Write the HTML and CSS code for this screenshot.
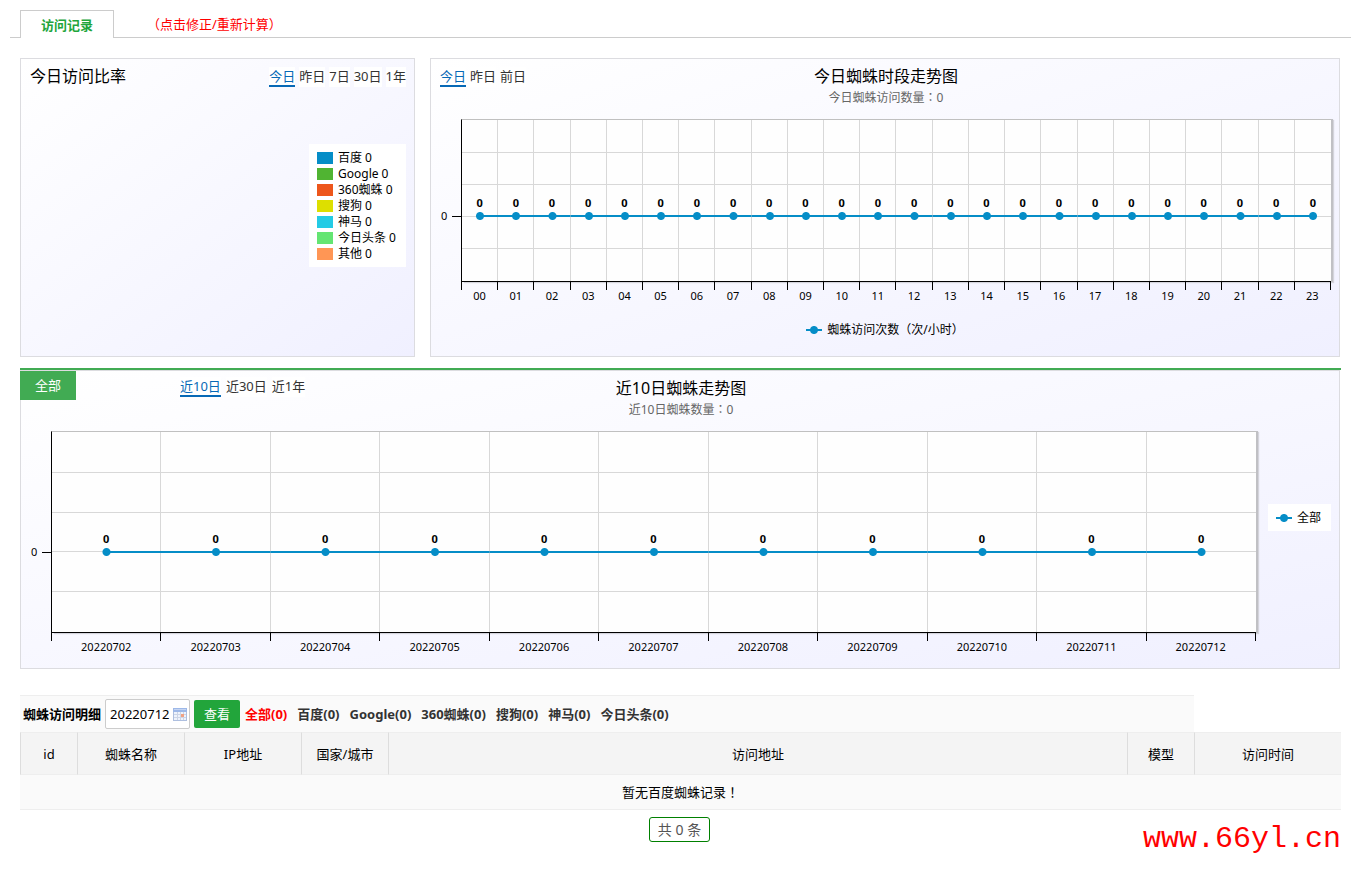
FILE: index.html
```html
<!DOCTYPE html>
<html lang="zh-CN">
<head>
<meta charset="utf-8">
<title>访问记录</title>
<link rel="stylesheet" href="styles.css">
</head>
<body>
<nav class="tabs">
  <a class="tab" href="#records">访问记录</a>
  <a class="recount" href="#recount">（点击修正/重新计算）</a>
</nav>

<main class="content" id="records">
  <div class="panels">
    <section class="panel ratio">
      <header class="ratio-head">
        <h2 class="chart-title">今日访问比率</h2>
        <div class="ranges">
          <a class="range current" href="#today">今日</a>
          <a class="range" href="#yesterday">昨日</a>
          <a class="range" href="#7d">7日</a>
          <a class="range" href="#30d">30日</a>
          <a class="range" href="#1y">1年</a>
        </div>
      </header>
      <ul class="pie-legend">
        <li><i class="swatch baidu"></i>百度 0</li>
        <li><i class="swatch google"></i>Google 0</li>
        <li><i class="swatch so360"></i>360蜘蛛 0</li>
        <li><i class="swatch sogou"></i>搜狗 0</li>
        <li><i class="swatch shenma"></i>神马 0</li>
        <li><i class="swatch toutiao"></i>今日头条 0</li>
        <li><i class="swatch other"></i>其他 0</li>
      </ul>
    </section>

    <section class="panel hourly">
      <header class="chart-head">
        <div class="ranges">
          <a class="range current" href="#h-today">今日</a>
          <a class="range" href="#h-yesterday">昨日</a>
          <a class="range" href="#h-before">前日</a>
        </div>
        <div class="titles">
          <h2 class="chart-title">今日蜘蛛时段走势图</h2>
          <p class="subtitle">今日蜘蛛访问数量<span class="colon" lang="zh-TW">：</span>0</p>
        </div>
      </header>
      <div class="chart">
        <div class="y-axis"><span>0</span></div>
        <div class="chart-main">
          <ol class="plot">
            <li><b>0</b><i></i></li><li><b>0</b><i></i></li><li><b>0</b><i></i></li><li><b>0</b><i></i></li>
            <li><b>0</b><i></i></li><li><b>0</b><i></i></li><li><b>0</b><i></i></li><li><b>0</b><i></i></li>
            <li><b>0</b><i></i></li><li><b>0</b><i></i></li><li><b>0</b><i></i></li><li><b>0</b><i></i></li>
            <li><b>0</b><i></i></li><li><b>0</b><i></i></li><li><b>0</b><i></i></li><li><b>0</b><i></i></li>
            <li><b>0</b><i></i></li><li><b>0</b><i></i></li><li><b>0</b><i></i></li><li><b>0</b><i></i></li>
            <li><b>0</b><i></i></li><li><b>0</b><i></i></li><li><b>0</b><i></i></li><li><b>0</b><i></i></li>
          </ol>
          <ol class="x-axis">
            <li>00</li><li>01</li><li>02</li><li>03</li><li>04</li><li>05</li><li>06</li><li>07</li>
            <li>08</li><li>09</li><li>10</li><li>11</li><li>12</li><li>13</li><li>14</li><li>15</li>
            <li>16</li><li>17</li><li>18</li><li>19</li><li>20</li><li>21</li><li>22</li><li>23</li>
          </ol>
        </div>
      </div>
      <p class="series-legend"><i class="marker"></i>蜘蛛访问次数（次/小时）</p>
    </section>
  </div>

  <section class="daily-wrap">
    <div class="panel daily">
      <header class="chart-head">
        <div class="daily-left">
          <a class="all-tab" href="#all">全部</a>
          <div class="ranges">
            <a class="range current" href="#10d">近10日</a>
            <a class="range" href="#d-30d">近30日</a>
            <a class="range" href="#d-1y">近1年</a>
          </div>
        </div>
        <div class="titles">
          <h2 class="chart-title">近10日蜘蛛走势图</h2>
          <p class="subtitle">近10日蜘蛛数量<span class="colon" lang="zh-TW">：</span>0</p>
        </div>
      </header>
      <div class="chart">
        <div class="y-axis"><span>0</span></div>
        <div class="chart-main">
          <ol class="plot">
            <li><b>0</b><i></i></li><li><b>0</b><i></i></li><li><b>0</b><i></i></li><li><b>0</b><i></i></li>
            <li><b>0</b><i></i></li><li><b>0</b><i></i></li><li><b>0</b><i></i></li><li><b>0</b><i></i></li>
            <li><b>0</b><i></i></li><li><b>0</b><i></i></li><li><b>0</b><i></i></li>
          </ol>
          <ol class="x-axis">
            <li>20220702</li><li>20220703</li><li>20220704</li><li>20220705</li><li>20220706</li><li>20220707</li>
            <li>20220708</li><li>20220709</li><li>20220710</li><li>20220711</li><li>20220712</li>
          </ol>
        </div>
        <p class="side-legend"><i class="marker"></i>全部</p>
      </div>
    </div>
  </section>

  <table class="records">
    <colgroup>
      <col class="c-id"><col class="c-name"><col class="c-ip"><col class="c-city"><col><col class="c-model"><col class="c-time">
    </colgroup>
    <thead>
      <tr>
        <td class="filter-cell" colspan="6">
          <form class="filter">
            <label class="filter-label" for="day">蜘蛛访问明细</label>
            <span class="date-box">
              <input id="day" type="text" value="20220712">
              <svg class="calendar" viewBox="0 0 14 13" aria-hidden="true">
                <rect x="0.5" y="0.5" width="13" height="12" fill="#eef3fc" stroke="#aebfdf"/>
                <rect x="0" y="0" width="14" height="4" fill="#9db8e8"/>
                <path d="M1 1.5h12" stroke="#c5d5f3"/>
                <path d="M1 6.5h12M1 9.5h12M4.500 4v8M7.500 4v8M10.500 4v8" stroke="#ccd5e6"/>
                <rect x="8" y="6" width="3" height="3" fill="#f0a183"/>
              </svg>
            </span>
            <button class="view" type="submit">查看</button>
            <a class="kind active" href="#k-all">全部(0)</a>
            <a class="kind" href="#k-baidu">百度(0)</a>
            <a class="kind" href="#k-google">Google(0)</a>
            <a class="kind" href="#k-360">360蜘蛛(0)</a>
            <a class="kind" href="#k-sogou">搜狗(0)</a>
            <a class="kind" href="#k-shenma">神马(0)</a>
            <a class="kind" href="#k-toutiao">今日头条(0)</a>
          </form>
        </td>
      </tr>
      <tr class="heads">
        <th>id</th><th>蜘蛛名称</th><th>IP地址</th><th>国家/城市</th><th>访问地址</th><th>模型</th><th>访问时间</th>
      </tr>
    </thead>
    <tbody>
      <tr><td class="empty" colspan="7">暂无百度蜘蛛记录<span class="colon" lang="zh-TW">！</span></td></tr>
    </tbody>
  </table>

  <footer class="pager"><span class="total">共 0 条</span></footer>
</main>
<div class="watermark">www.66yl.cn</div>
</body>
</html>
```
FILE: styles.css
```css
* { box-sizing: border-box; }

body {
  margin: 0;
  padding: 10px 10px 0;
  background: #fff;
  color: #000;
  font: 13px/20px "Noto Sans", "Noto Sans CJK SC", sans-serif;
  position: relative;
}

a { color: #333; text-decoration: none; }
h2, p, ol, ul { margin: 0; padding: 0; font-weight: normal; list-style: none; }

.tabs {
  display: flex;
  height: 28px;
  padding-left: 10px;
  border-bottom: 1px solid #ccc;
}
.tab {
  height: 28px;
  padding: 4px 20px 0;
  border: 1px solid #ccc;
  border-bottom: 0;
  background: #fff;
  color: #22a53b;
  font-weight: bold;
}
.recount { margin-left: 33px; padding-top: 4px; color: #f00; }

.content { padding: 20px 10px 0; }
.panels { display: grid; grid-template-columns: 395px 1fr; gap: 15px; margin-right: 1px; }
.panel {
  border: 1px solid #dcdce0;
  background: linear-gradient(to bottom right, #fff, #f0f0ff);
}

.chart-title { font-size: 16px; line-height: 24px; }
.subtitle { color: #666; font-size: 12px; line-height: 20px; }
.colon { font-family: "Noto Sans CJK TC", sans-serif; line-height: 1; }
.ranges { display: flex; gap: 4px; line-height: 18px; }
.range { height: 20px; background: #fff; }
.range.current { color: #0769b6; border-bottom: 2px solid #0769b6; }

.ratio { height: 299px; }
.ratio-head { display: flex; justify-content: space-between; padding: 5px 8px 0 9px; }
.ratio-head .ranges { padding-top: 3px; }
.pie-legend {
  width: 97px;
  margin: 56px 8px 0 auto;
  padding: 6px 8px 5px;
  background: #fff;
  font-size: 12px;
  line-height: 16px;
  white-space: nowrap;
}
.pie-legend li { display: flex; align-items: center; gap: 5px; }
.swatch { width: 16px; height: 12px; }
.baidu { background: #058dc7; }
.google { background: #50b432; }
.so360 { background: #ed561b; }
.sogou { background: #dddf00; }
.shenma { background: #24cbe5; }
.toutiao { background: #64e572; }
.other { background: #ff9655; }

.chart-head { display: grid; grid-template-columns: 1fr auto 1fr; height: 60px; }
.titles { padding: 5px 0 0 2px; text-align: center; }
.hourly .ranges { padding: 8px 0 0 9px; }

.chart { display: flex; font-size: 11px; line-height: 16px; }
.chart-main { flex: 1; min-width: 0; }
.y-axis { display: flex; flex-direction: column; justify-content: center; }
.y-axis span {
  background: linear-gradient(#000, #000) no-repeat right center / 9px 1px;
}
.plot, .x-axis { display: grid; grid-auto-flow: column; grid-auto-columns: 1fr; }
.plot {
  border-left: 1px solid #000;
  border-bottom: 1px solid #000;
  border-top: 1px solid #c0c0c0;
  background:
    linear-gradient(#d8d8d8, #d8d8d8) no-repeat 0 20% / 100% 1px,
    linear-gradient(#d8d8d8, #d8d8d8) no-repeat 0 40% / 100% 1px,
    linear-gradient(#d8d8d8, #d8d8d8) no-repeat 0 60% / 100% 1px,
    linear-gradient(#d8d8d8, #d8d8d8) no-repeat 0 80% / 100% 1px,
    #fefefe;
  box-shadow: 2px 0 0 #c0c0c4, 3px 1px 1px #d4d4dc;
}
.plot li { border-right: 1px solid #d8d8d8; text-align: center; }
.plot li:last-child { border-right: 0; }
.plot b, .plot i { display: block; }
.plot b { height: 16px; margin-bottom: 1px; }
.plot i {
  height: 8px;
  margin-right: -1px;
  background:
    radial-gradient(circle, #058dc7 0 3px, #058dc7 3.5px, transparent 4.5px),
    linear-gradient(#058dc7, #058dc7) no-repeat center / 100% 2px;
}
.plot li:first-child i {
  background:
    radial-gradient(circle, #058dc7 0 3px, #058dc7 3.5px, transparent 4.5px),
    linear-gradient(#058dc7, #058dc7) no-repeat right center / 50% 2px;
}
.plot li:last-child i {
  margin-right: 0;
  background:
    radial-gradient(circle, #058dc7 0 3px, #058dc7 3.5px, transparent 4.5px),
    linear-gradient(#058dc7, #058dc7) no-repeat left center / 50% 2px;
}
.x-axis { border-left: 1px solid #000; height: 8px; }
.x-axis li { height: 8px; padding-top: 6px; border-right: 1px solid #000; text-align: center; }

.hourly .chart { padding-right: 8px; }
.hourly .y-axis { width: 30px; height: 194px; padding-left: 10px; }
.hourly .plot { height: 163px; }
.hourly .plot b { margin-top: 75px; }

.series-legend, .side-legend { display: flex; align-items: center; gap: 5px; font-size: 12px; line-height: 16px; }
.series-legend { justify-content: center; margin-top: 9px; }
.marker {
  width: 16px;
  height: 8px;
  background:
    radial-gradient(circle, #058dc7 0 3px, #058dc7 3.5px, transparent 4.5px),
    linear-gradient(#058dc7, #058dc7) no-repeat center / 100% 2px;
}

.daily-wrap { margin-top: 11px; border-top: 2px solid #41ab53; }
.daily { height: 299px; margin-right: 1px; }
.daily-left { display: flex; align-items: flex-start; }
.all-tab {
  width: 56px;
  height: 29px;
  margin: 0 104px 0 -1px;
  background: #41ab53;
  color: #fff;
  line-height: 29px;
  text-align: center;
}
.daily .ranges { gap: 5px; padding-top: 6px; }
.daily .y-axis { width: 30px; height: 242px; padding-left: 10px; }
.daily .plot { height: 202px; }
.daily .plot b { margin-top: 99px; }
.side-legend { width: 63px; height: 27px; margin: 73px 8px 0 12px; padding-left: 8px; background: #fff; }

.records { width: 100%; margin-top: 26px; border-collapse: separate; border-spacing: 0; table-layout: fixed; }
.c-id { width: 57px; }
.c-name { width: 107px; }
.c-ip { width: 117px; }
.c-city { width: 87px; }
.c-model { width: 67px; }
.c-time { width: 147px; }
.records th, .records td { padding: 0; }
.records th {
  height: 43px;
  border: solid #ddd;
  border-width: 1px 0 1px 1px;
  border-top-color: #eee;
  border-bottom-color: #eee;
  background: #f4f4f4;
  font-weight: normal;
}
.filter-cell { height: 37px; border-top: 1px solid #eee; background: #fafafa; }
.filter { display: flex; align-items: center; padding-left: 3px; line-height: 18px; }
.filter-label { margin-right: 4px; font-weight: bold; }
.date-box {
  display: flex;
  align-items: center;
  width: 85px;
  height: 30px;
  margin-right: 4px;
  padding: 0 2px 0 4px;
  border: 1px solid #ccc;
  border-radius: 2px;
  background: #fff;
}
.date-box input {
  flex: 1;
  min-width: 0;
  padding: 0;
  border: 0;
  outline: 0;
  background: none;
  color: #000;
  font: 13px/18px "Noto Sans", sans-serif;
}
.calendar { width: 14px; height: 13px; }
.view {
  width: 46px;
  height: 28px;
  margin-right: 5px;
  padding: 0;
  border: 0;
  border-radius: 2px;
  background: #22a53b;
  color: #fff;
  font: 13px/20px "Noto Sans CJK SC", sans-serif;
}
.kind { margin-right: 10px; font-weight: bold; }
.kind.active { color: #f00; }
.records .empty { height: 35px; border-bottom: 1px solid #eee; background: #fafafa; text-align: center; }

.pager { display: flex; justify-content: center; padding: 7px 2px 27px 0; }
.total {
  padding: 0 8px;
  border: 1px solid #008000;
  border-radius: 3px;
  color: #555;
  font-size: 14px;
  line-height: 23px;
}

.watermark {
  position: absolute;
  right: 20px;
  bottom: 10px;
  color: #f00;
  font: 30px/40px "Liberation Mono", monospace;
}
```
